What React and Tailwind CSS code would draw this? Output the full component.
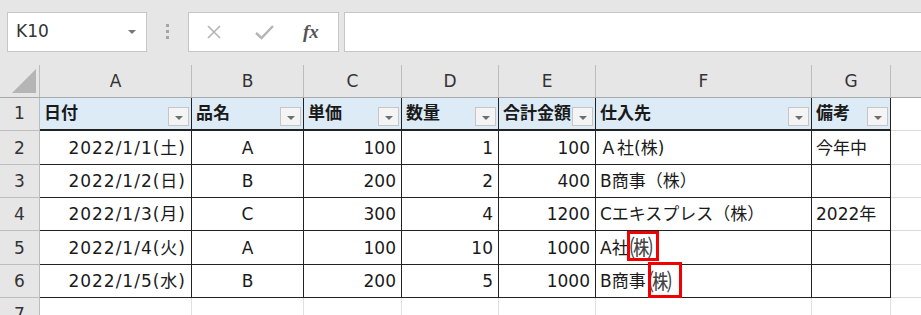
import React from 'react';

const COLS = ['A', 'B', 'C', 'D', 'E', 'F', 'G'];

const HEAD = ['日付', '品名', '単価', '数量', '合計金額', '仕入先', '備考'];

const ROWS = [
  { n: 2, h: 'h-[34px]', cells: ['2022/1/1(土)', 'A', '100', '1', '100', 'Ａ社(株)', '今年中'] },
  { n: 3, h: 'h-[33px]', cells: ['2022/1/2(日)', 'B', '200', '2', '400', 'B商事（株）', ''] },
  { n: 4, h: 'h-[33px]', cells: ['2022/1/3(月)', 'C', '300', '4', '1200', 'Cエキスプレス（株）', '2022年'] },
  { n: 5, h: 'h-[34px]', cells: ['2022/1/4(火)', 'A', '100', '10', '1000', 'A社', ''], mark: 'small' },
  { n: 6, h: 'h-[33px]', cells: ['2022/1/5(水)', 'B', '200', '5', '1000', 'B商事', ''], mark: 'big' },
];

const ALIGN = [
  'justify-end pr-[5px] tracking-[1px]',
  'justify-center',
  'justify-end pr-[5px]',
  'justify-end pr-[5px]',
  'justify-end pr-[5px]',
  'justify-start pl-[4px]',
  'justify-start pl-[4px]',
];

const GRID = 'grid grid-cols-[40px_152px_112px_98px_97px_97px_216px_79px_1fr]';

function FilterButton() {
  return (
    <div className="absolute right-[2px] top-[9px] flex h-[19px] w-[21px] items-end justify-center border border-[#c6c6c6] bg-[#f4f4f4] pb-[5px]">
      <div className="h-0 w-0 border-x-[4px] border-t-[4px] border-x-transparent border-t-[#6d6d6d]" />
    </div>
  );
}

// red highlight round the ㈱ glyph
function Mark({ kind }) {
  return (
    <>
      <span className={`text-[23px] leading-none text-[#444] ${kind === 'big' ? 'ml-[3px]' : 'ml-[1px]'}`}>㈱</span>
      {kind === 'small' ? (
        <span className="absolute left-[31px] top-0 h-[30px] w-[32px] border-[3px] border-[#f00000]" />
      ) : (
        <span className="absolute left-[52px] top-[-3px] h-[36px] w-[34px] border-[3px] border-[#f00000]" />
      )}
    </>
  );
}

export default function App() {
  return (
    <div className="h-[315px] w-[921px] overflow-hidden bg-[#e6e6e6] font-['DejaVu_Sans','Noto_Sans_CJK_JP',sans-serif] text-[17px] text-[#1a1a1a]">
      {/* formula bar */}
      <div className="flex h-[65px] items-start pt-[12px]">
        <div className="ml-[7px] flex h-[40px] w-[140px] items-center justify-between border border-[#c6c6c6] bg-white pl-[8px] pr-[10px] text-[#333]">
          <span>K10</span>
          <div className="h-0 w-0 border-x-[4px] border-t-[4px] border-x-transparent border-t-[#777]" />
        </div>
        <div className="ml-[19px] mt-[12px] flex flex-col gap-[3px]">
          <div className="h-[3px] w-[3px] bg-[#a5a5a5]" />
          <div className="h-[3px] w-[3px] bg-[#a5a5a5]" />
          <div className="h-[3px] w-[3px] bg-[#a5a5a5]" />
        </div>
        <div className="ml-[19px] flex h-[40px] w-[151px] items-center border border-[#c6c6c6] bg-white">
          <svg className="ml-[17px]" width="16" height="16" viewBox="0 0 16 16">
            <path d="M2 2 L14 14 M14 2 L2 14" stroke="#b4b4b4" strokeWidth="1.6" fill="none" />
          </svg>
          <svg className="ml-[33px]" width="19" height="16" viewBox="0 0 19 16">
            <path d="M1 9 L6.5 14 L18 2" stroke="#b4b4b4" strokeWidth="2.4" fill="none" />
          </svg>
          <span className="ml-[29px] font-['Liberation_Serif',serif] text-[19px] font-bold italic text-[#555]">fx</span>
        </div>
        <div className="ml-[5px] h-[40px] flex-1 border border-r-0 border-[#c6c6c6] bg-white" />
      </div>

      {/* column headers */}
      <div className={`${GRID} h-[33px] border-b border-[#a8a8a8] text-[#333]`}>
        <div className="relative border-r border-[#bdbdbd]">
          <svg className="absolute bottom-[4px] left-[12px]" width="24" height="24" viewBox="0 0 24 24">
            <path d="M24 0 L24 24 L0 24 Z" fill="#b5b5b5" />
          </svg>
        </div>
        {COLS.map((c) => (
          <div key={c} className="flex items-center justify-center border-r border-[#bdbdbd] pt-[1px]">
            {c}
          </div>
        ))}
        <div />
      </div>

      {/* row 1: table header */}
      <div className={`${GRID} h-[33px] bg-white`}>
        <div className="flex items-center justify-center border-b border-r border-[#bdbdbd] bg-[#e6e6e6] text-[#333]">1</div>
        {HEAD.map((t) => (
          <div key={t} className="relative flex items-center overflow-hidden border-b-2 border-r border-[#222] bg-[#ddebf7] pl-[4px] font-bold">
            <span className="whitespace-nowrap">{t}</span>
            <FilterButton />
          </div>
        ))}
        <div className="border-b border-[#dadada]" />
      </div>

      {/* data rows */}
      {ROWS.map((r) => (
        <div key={r.n} className={`${GRID} ${r.h} bg-white`}>
          <div className="flex items-center justify-center border-b border-r border-[#bdbdbd] bg-[#e6e6e6] pt-[2px] text-[#333]">{r.n}</div>
          {r.cells.map((t, i) => (
            <div key={i} className={`relative flex items-center whitespace-nowrap border-b border-r border-[#222] pt-[2px] ${ALIGN[i]}`}>
              <span>{t}</span>
              {i === 5 && r.mark ? <Mark kind={r.mark} /> : null}
            </div>
          ))}
          <div className="border-b border-[#dadada]" />
        </div>
      ))}

      {/* row 7 */}
      <div className={`${GRID} h-[20px] bg-white`}>
        <div className="flex items-start justify-center border-r border-[#bdbdbd] bg-[#e6e6e6] pt-[4px] text-[#333]">7</div>
        <div className="border-r border-[#e0e0e0]" />
        <div className="border-r border-[#e0e0e0]" />
        <div className="border-r border-[#e0e0e0]" />
        <div className="border-r border-[#e0e0e0]" />
        <div className="border-r border-[#e0e0e0]" />
        <div className="border-r border-[#e0e0e0]" />
        <div className="border-r border-[#e0e0e0]" />
        <div />
      </div>
    </div>
  );
}
